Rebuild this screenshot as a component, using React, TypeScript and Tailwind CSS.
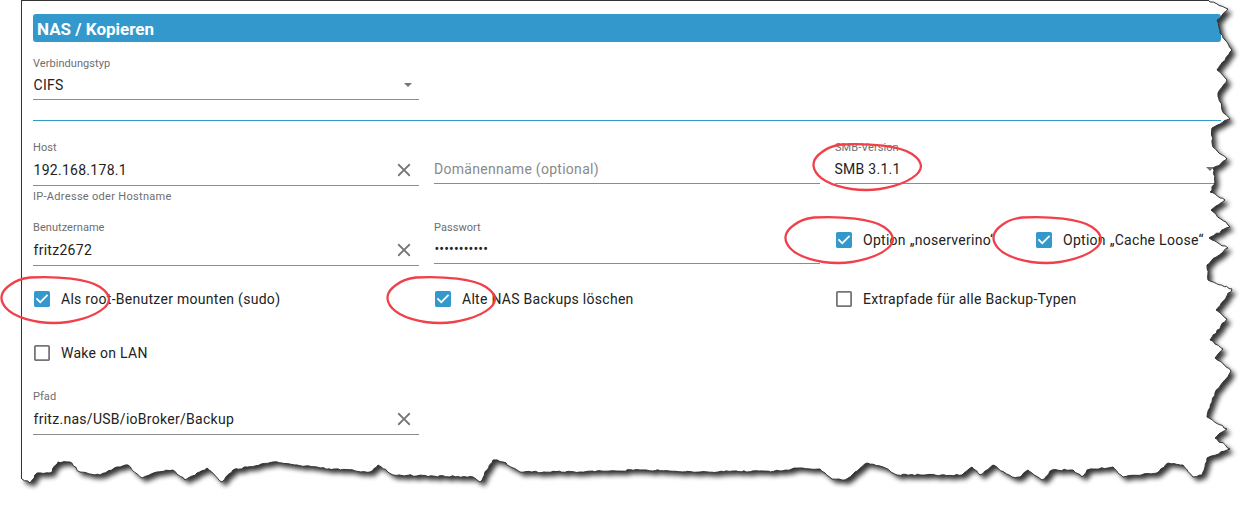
import type { ReactNode } from 'react';

const edgePoints: [number, number][] = [
  [1208, 0], [1228, 9], [1217, 20], [1220, 33], [1232, 50], [1217, 70], [1227, 80], [1218, 93], [1222, 110],
  [1230, 119], [1212, 128], [1213, 147], [1227, 159], [1213, 168], [1215, 182], [1210, 192], [1225, 200],
  [1211, 210], [1230, 227], [1209, 238], [1228, 248], [1207, 265], [1208, 280], [1232, 289], [1216, 310],
  [1227, 319], [1210, 340], [1223, 349], [1215, 358], [1231, 371], [1215, 393], [1207, 417], [1227, 429],
  [1215, 438], [1230, 449], [1207, 458], [1202, 475], [1193, 477], [1183, 465], [1168, 463], [1157, 473],
  [1123, 477], [1113, 467], [1087, 470], [1082, 477], [1073, 470], [1052, 470], [1042, 480], [1028, 470],
  [1020, 477], [1012, 477], [993, 465], [980, 475], [972, 467], [962, 475], [897, 475], [883, 467], [867, 463],
  [855, 472], [845, 480], [832, 479], [820, 469], [800, 468], [780, 471], [700, 472], [640, 470], [580, 472],
  [520, 472], [503, 462], [493, 460], [480, 482], [473, 477], [393, 475], [378, 465], [370, 472], [320, 468],
  [273, 462], [233, 470], [222, 482], [207, 468], [197, 473], [185, 480], [173, 470], [157, 472], [142, 478],
  [128, 465], [117, 467], [100, 475], [80, 472], [70, 462], [58, 462], [50, 473], [37, 473], [30, 483], [22, 479],
];

// roughens the hand-picked outline a little so it looks torn
function tornPath() {
  let seed = 7;
  const rand = () => {
    seed = (seed * 16807) % 2147483647;
    return seed / 2147483647 - 0.5;
  };
  let d = `M${edgePoints[0][0]} ${edgePoints[0][1]}`;
  for (let i = 1; i < edgePoints.length; i++) {
    const [x0, y0] = edgePoints[i - 1];
    const [x1, y1] = edgePoints[i];
    const steps = Math.max(1, Math.round(Math.hypot(x1 - x0, y1 - y0) / 3));
    for (let s = 1; s <= steps; s++) {
      const t = s / steps;
      const n = s === steps ? 0 : 1.6;
      d += `L${(x0 + (x1 - x0) * t + rand() * n).toFixed(1)} ${(y0 + (y1 - y0) * t + rand() * n).toFixed(1)}`;
    }
  }
  return d;
}

const edge = tornPath();
const paper = `M21 0L${edge.slice(1)}L21 479Z`;
const outside = `M0 0H1253V505H0Z${paper}`;

const circles: [number, number][] = [
  [812, 143],
  [784, 216],
  [992, 216],
  [0, 276],
  [386, 276],
];

function PaperEdge() {
  return (
    <svg className="absolute inset-0 pointer-events-none" width={1253} height={505} aria-hidden="true">
      <defs>
        <clipPath id="outside">
          <path d={outside} clipRule="evenodd" />
        </clipPath>
        <filter id="blur" x="-5%" y="-5%" width="110%" height="110%">
          <feGaussianBlur stdDeviation="2.4" />
        </filter>
      </defs>
      <path d={outside} fill="#fff" fillRule="evenodd" />
      <g clipPath="url(#outside)">
        <path d={paper} fill="#000" opacity="0.8" filter="url(#blur)" transform="translate(4 4)" />
      </g>
      <path d={edge} fill="none" stroke="#333" strokeWidth="1" />
      {circles.map(([x, y]) => (
        <g key={x} transform={`translate(${x} ${y})`} fill="none" stroke="#f0404a" strokeLinecap="round">
          <path
            d="M30 1.5C58 0 88 3 100 11C110 18 112 25 104 32C94 41 72 47 54 47C34 47 14 41 6 32C-1 24 0 16 10 9C15 5 22 2.5 30 1.5"
            strokeWidth="2.3"
          />
        </g>
      ))}
    </svg>
  );
}

function ClearIcon() {
  return (
    <svg width={22} height={22} viewBox="0 0 24 24" fill="#757575" className="mr-[4px] shrink-0">
      <path d="M19 6.41L17.59 5 12 10.59 6.41 5 5 6.41 10.59 12 5 17.59 6.41 19 12 13.41 17.59 19 19 17.59 13.41 12z" />
    </svg>
  );
}

function Caret() {
  return (
    <svg width={8} height={4} viewBox="0 0 8 4" fill="#757575" className="mr-[7px] shrink-0">
      <path d="M0 0h8L4 4z" />
    </svg>
  );
}

function Field({
  label,
  children,
  right,
  tall,
}: {
  label?: string;
  children: ReactNode;
  right?: ReactNode;
  tall?: boolean;
}) {
  return (
    <div className="flex flex-col border-b border-[#8c8c8c]">
      <div className="mt-px h-[14px] text-[11px] leading-[14px] tracking-[0.05px] text-[#6e6e6e]">{label}</div>
      <div className={`mt-[2px] mb-[2px] flex items-center justify-between ${tall ? 'h-[26px]' : 'h-[24px]'}`}>
        <div className="text-[14px] leading-[24px] tracking-[0.28px] text-[#222] pl-[0.5px]">{children}</div>
        {right}
      </div>
    </div>
  );
}

function Check({ label, checked }: { label: string; checked?: boolean }) {
  return (
    <div className="flex items-center gap-[11.5px] h-[24px] pl-[0.5px]">
      <svg width={16} height={16} viewBox="3 3 18 18" className="shrink-0" fill={checked ? '#3399cc' : '#757575'}>
        {checked ? (
          <path d="M19 3H5c-1.11 0-2 .9-2 2v14c0 1.1.89 2 2 2h14c1.11 0 2-.9 2-2V5c0-1.1-.89-2-2-2zm-9 14l-5-5 1.41-1.41L10 14.17l7.59-7.59L19 8l-9 9z" />
        ) : (
          <path d="M19 5v14H5V5h14m0-2H5c-1.1 0-2 .9-2 2v14c0 1.1.9 2 2 2h14c1.1 0 2-.9 2-2V5c0-1.1-.9-2-2-2z" />
        )}
      </svg>
      <span className="text-[14px] tracking-[0.28px] text-[#222] whitespace-nowrap">{label}</span>
    </div>
  );
}

export default function App() {
  return (
    <div className="relative w-[1253px] h-[505px] overflow-hidden bg-white font-['Roboto',sans-serif]">
      <div className="ml-[21px] w-[1200px] h-[490px] border-l border-t border-[#333] pl-[11px] pt-[13px]">
        <div className="h-[28px] rounded-[3px] bg-[#3399cc] pl-[4px] text-[17px] font-bold leading-[30px] text-white">
          NAS / Kopieren
        </div>

        <div className="mt-[14px] w-[386px]">
          <Field label="Verbindungstyp" right={<Caret />}>
            CIFS
          </Field>
        </div>
        <div className="mt-[20px] border-b border-[#3399cc]" />

        <div className="mt-[19px] grid grid-cols-3 items-start gap-x-[15px]">
          <div>
            <Field label="Host" tall right={<ClearIcon />}>
              192.168.178.1
            </Field>
            <div className="mt-[4px] h-[14px] text-[11px] leading-[14px] tracking-[0.3px] text-[#6e6e6e]">
              IP-Adresse oder Hostname
            </div>
          </div>
          <Field>
            <span className="-ml-[0.5px] text-[#8a8a8a]">Domänenname (optional)</span>
          </Field>
          <Field label="SMB-Version" right={<Caret />}>
            <span className="-ml-px">SMB 3.1.1</span>
          </Field>
        </div>

        <div className="mt-[16px] grid grid-cols-3 items-start gap-x-[15px]">
          <Field label="Benutzername" tall right={<ClearIcon />}>
            fritz2672
          </Field>
          <Field label="Passwort">
            <span className="tracking-[0.15px]">•••••••••••</span>
          </Field>
          <div className="flex h-[40px] items-center">
            <div className="w-[200px]">
              <Check label="Option „noserverino“" checked />
            </div>
            <Check label="Option „Cache Loose“" checked />
          </div>
        </div>

        <div className="mt-[21px] grid grid-cols-3 gap-x-[15px]">
          <Check label="Als root-Benutzer mounten (sudo)" checked />
          <Check label="Alte NAS Backups löschen" checked />
          <Check label="Extrapfade für alle Backup-Typen" />
        </div>

        <div className="mt-[30px]">
          <Check label="Wake on LAN" />
        </div>

        <div className="mt-[24px] w-[386px]">
          <Field label="Pfad" tall right={<ClearIcon />}>
            fritz.nas/USB/ioBroker/Backup
          </Field>
        </div>
      </div>
      <PaperEdge />
    </div>
  );
}
